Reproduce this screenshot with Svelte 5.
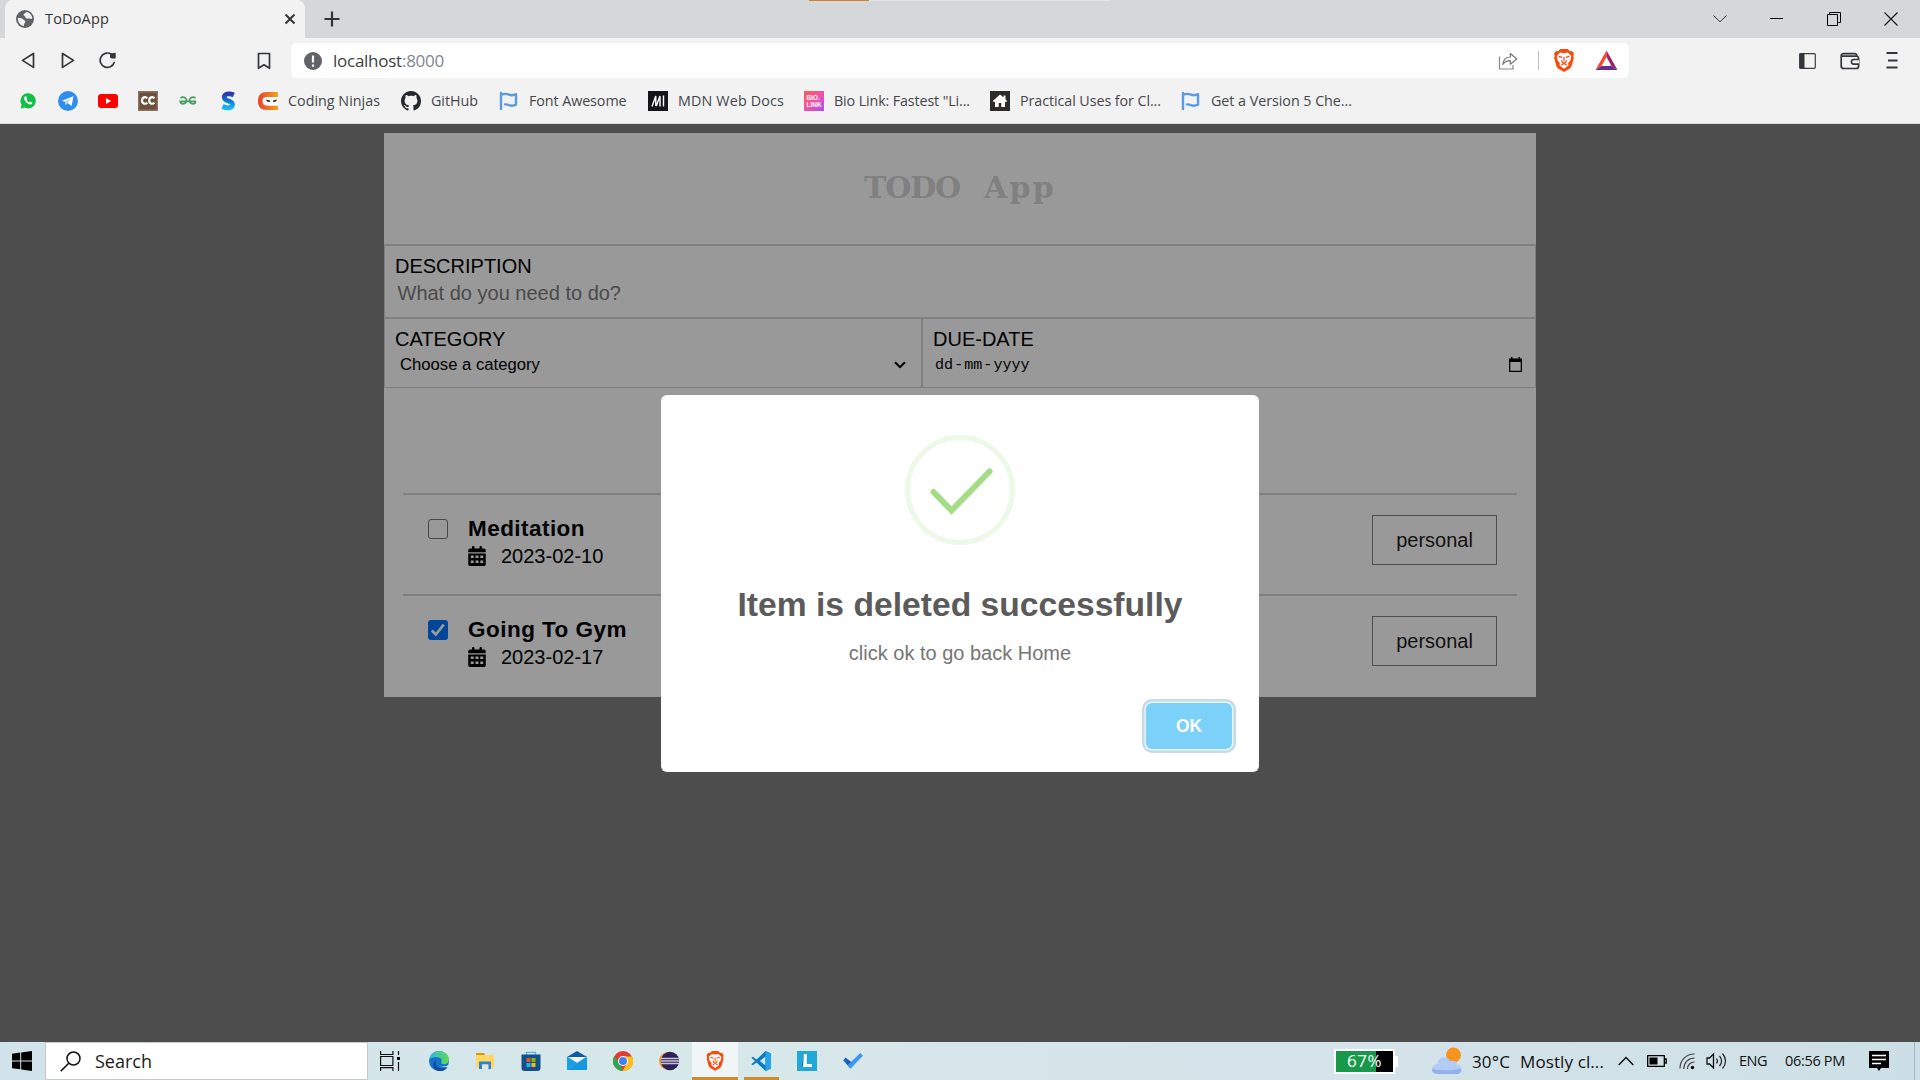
<script>
  // Spreads the letters so that a label takes the given width.
  function fit(node, width) {
    const natural = node.getBoundingClientRect().width;
    node.style.letterSpacing = `${(width - natural) / node.textContent.length}px`;
  }

  const bookmarks = [
    { icon: 'whatsapp' },
    { icon: 'telegram' },
    { icon: 'youtube' },
    { icon: 'cc' },
    { icon: 'gfg' },
    { icon: 's' },
    { icon: 'ninjas', label: 'Coding Ninjas', width: 92 },
    { icon: 'github', label: 'GitHub', width: 47 },
    { icon: 'flag', label: 'Font Awesome', width: 97.5 },
    { icon: 'mdn', label: 'MDN Web Docs', width: 106 },
    { icon: 'bio', label: 'Bio Link: Fastest "Li...', width: 136 },
    { icon: 'house', label: 'Practical Uses for Cl...', width: 141 },
    { icon: 'flag', label: 'Get a Version 5 Che...', width: 141 },
  ];

  const items = [
    { title: 'Meditation', width: 117, date: '2023-02-10', category: 'personal', done: false },
    { title: 'Going To Gym', width: 159, date: '2023-02-17', category: 'personal', done: true },
  ];

  const apps = ['edge', 'explorer', 'store', 'mail', 'chrome', 'eclipse', 'brave', 'vscode', 'l', 'check'];
</script>

{#snippet lion()}
  <path d="M6.2 0h7.6l2 2.2 2.2-.2 2 2.8-.8 2.2.6 2-2 7.4c-.6 2-2 3.200-3.600 4.200L10 23l-4.200-2.400c-1.600-1-3-2.200-3.600-4.200L.2 9l.6-2L0 4.800 2 2l2.200.2z" fill="#fb4a0b" />
  <path d="M6 3.400l4 .8 4-.8 3.200 3.600-.6 4-2.400 3 .2 2.600L10 19.800l-4.400-3.200.2-2.600-2.400-3-.6-4z" fill="#fff" />
  <path d="M4.600 7.400l3.600 1M15.400 7.400l-3.600 1M10 8v4M7.600 11.200l.6 2 1.800.8 1.800-.8.600-2M7.200 16.200L10 14.400l2.800 1.800" fill="none" stroke="#fb4a0b" stroke-width="1.200" />
{/snippet}

<div class="screen">
  <header class="tabs">
    <div class="tab">
      <svg class="globe" width="18" height="18" viewBox="0 0 18 18"><circle cx="9" cy="9" r="9" fill="#5f6368" /><path d="M1.800 8c2.500 0 5 0 5.500 1.500.3 1 1.600.6 2 1.800.3 1.400-1.500 1.500-1.300 4.700C4.500 15.500 1.800 12.500 1.800 8zM10 2c-.3 1.800-2.500 1.200-2.500 2.700S9 5.500 9.200 6.700c.3 1.600 1.800 2.300 3.800 1.800 1-.3 2 .2 3.200.5C16.500 5.500 14 2.500 10 2z" fill="#f2f2f2" /></svg>
      <span class="tab-title"><span class="fit" use:fit={64}>ToDoApp</span></span>
      <svg width="12" height="12" viewBox="0 0 12 12"><path d="M1.500 1.500l9 9M10.500 1.500l-9 9" stroke="#2f3236" stroke-width="1.900" /></svg>
    </div>
    <svg class="plus" width="16" height="16" viewBox="0 0 16 16"><path d="M8 .5v15M.5 8h15" stroke="#303236" stroke-width="2.200" /></svg>
    <div class="snapbar"><i></i></div>
    <div class="window-buttons">
      <svg width="14" height="14" viewBox="0 0 14 14"><path d="M.5 3.500L7 9.800l6.500-6.300" fill="none" stroke="#333" stroke-width="1" /></svg>
      <svg width="14" height="14" viewBox="0 0 14 14"><path d="M0 6.500h13" stroke="#000" stroke-width="1" /></svg>
      <svg width="14" height="14" viewBox="0 0 14 14"><path d="M.5 2.500h10v11H.5zM2.500 2.500v-2h11v10h-3" fill="none" stroke="#000" stroke-width="1" /></svg>
      <svg width="14" height="14" viewBox="0 0 14 14"><path d="M.5.5l13 13M13.500.5l-13 13" stroke="#111" stroke-width="1.100" /></svg>
    </div>
  </header>

  <div class="toolbar">
    <div class="nav">
      <svg width="18" height="20" viewBox="0 0 18 20"><path d="M14.500 2.500v13.900L3.500 9.400z" fill="none" stroke="#33363a" stroke-width="1.700" stroke-linejoin="round" /></svg>
      <svg width="18" height="20" viewBox="0 0 18 20"><path d="M3.500 2.500v13.900l11-7z" fill="none" stroke="#33363a" stroke-width="1.700" stroke-linejoin="round" /></svg>
      <svg width="18" height="20" viewBox="0 0 18 20"><path d="M12 3A7.200 7.200 0 1 0 15.200 11.500" fill="none" stroke="#33363a" stroke-width="1.700" stroke-linecap="round" /><path d="M11.500 2.500l5.200-.8v5.800h-3.500c-2 0-2.400-1-2.200-2.500z" fill="#33363a" /></svg>
    </div>
    <svg class="ribbon" width="14" height="18" viewBox="0 0 14 18"><path d="M1.500 1.500h11v14.800L7 12.800l-5.500 3.500z" fill="none" stroke="#33363a" stroke-width="1.700" stroke-linejoin="round" /></svg>
    <div class="address">
      <svg width="18" height="18" viewBox="0 0 18 18"><circle cx="9" cy="9" r="9" fill="#5f6368" /><path d="M9 3.500v7M9 12.500v2.300" stroke="#fff" stroke-width="2.200" /></svg>
      <span class="url"><span class="fit" use:fit={111}>localhost<span class="port">:8000</span></span></span>
      <svg class="share" width="20" height="20" viewBox="0 0 20 20"><path d="M1.500 5.500v12.500H15v-4" fill="none" stroke="#888" stroke-width="1.200" /><path d="M4.800 13.500c.3-4.500 3.200-7.300 7.500-7.500V2.500L18.800 8l-6.500 5.200v-3.500c-3.300-.2-5.700 1.200-7.500 3.800z" fill="none" stroke="#777" stroke-width="1.200" stroke-linejoin="round" /></svg>
      <i class="divider"></i>
      <svg class="shield" width="20" height="23" viewBox="0 0 20 23">{@render lion()}</svg>
      <svg width="23" height="21" viewBox="0 0 23 21"><path d="M11.500.5L.5 20l6-4 5-9z" fill="#ff4724" /><path d="M11.500.5l11 19.500-6-4-5-9z" fill="#9e1f63" /><path d="M.5 20h22l-6-4h-10z" fill="#662d91" /></svg>
    </div>
    <div class="panel-buttons">
      <svg width="17" height="16" viewBox="0 0 17 16"><rect x=".7" y=".7" width="15.600" height="14.600" rx="1" fill="none" stroke="#3b3e43" stroke-width="1.200" /><path d="M.5.5h5v15h-5z" fill="#33363a" /></svg>
      <svg width="20" height="18" viewBox="0 0 20 18"><path d="M1.200 4.200v9.800c0 1.500.8 2.500 2.500 2.500h12.600c1.500 0 2.300-1 2.300-2.500V6.500c0-1.500-.8-2.300-2.300-2.300zM1.200 4.200c0-1.700.8-2.700 2.300-2.700h11.300c1.300 0 2 1 2 2.700" fill="none" stroke="#33363a" stroke-width="1.700" /><path d="M3 2.800h12" stroke="#777" /><path d="M19 7.500h-5.300a2.300 2.300 0 0 0 0 4.600H19" fill="#f2f2f2" stroke="#33363a" stroke-width="1.600" /></svg>
      <svg width="12" height="17" viewBox="0 0 12 17"><path d="M.5 1h11M2 8.500h9.500M.5 15.500h11" stroke="#33363a" stroke-width="1.900" /></svg>
    </div>
  </div>

  <nav class="bookmarks">
    {#each bookmarks as mark}
      <div class="bookmark">
        <svg width="20" height="20" viewBox="0 0 20 20">
          {#if mark.icon === 'whatsapp'}
            <path d="M1.200 19l1.400-5A8.600 8.600 0 1 1 6.200 17.600z" fill="#fff" /><path d="M2.500 17.700l1-3.900a7.700 7.700 0 1 1 2.900 2.800z" fill="#12c143" />
            <path d="M7 5.500c-1.500 1-1.200 3 .8 5.300s4.400 3.500 6 2.300c.7-.6.800-1.500.3-1.800l-1.700-.9-1.100 1c-1.300-.4-2.300-1.400-2.900-2.600l.8-1-.8-2.100c-.3-.5-.9-.5-1.400-.2z" fill="#fff" />
          {:else if mark.icon === 'telegram'}
            <circle cx="10" cy="10" r="10" fill="#2f8eed" /><path d="M3.800 9.700L15.500 5.200 13.600 15l-4-2.900-2 1.900-.5-3.200z" fill="#fff" /><path d="M7.200 11l6-4-4.200 4.700-1.200 1.500z" fill="#8cc1f4" />
          {:else if mark.icon === 'youtube'}
            <rect y="3" width="20" height="14" rx="3" fill="#f00" /><path d="M8 7l5.200 3L8 13z" fill="#fff" />
          {:else if mark.icon === 'cc'}
            <rect width="20" height="20" fill="#6a503d" /><path d="M.7.700h18.600v18.600H.7z" fill="none" stroke="#8b735f" stroke-width="1.400" /><path d="M9.300 7.300C7.500 5.300 4 6 4 9.500s3.500 4 5.300 2.200M16.500 7.300c-1.800-2-5.300-1.300-5.300 2.200s3.500 4 5.300 2.200" fill="none" stroke="#fff" stroke-width="2.200" />
          {:else if mark.icon === 'gfg'}
            <path d="M2.500 7.200c1.500-1.500 5.500-1.500 6 1.700.3 4.500-5.300 5.300-6.300 1.400H18M17.500 7.200c-1.500-1.500-5.500-1.500-6 1.700-.3 4.500 5.300 5.300 6.300 1.400" fill="none" stroke="#4a9e60" stroke-width="1.700" />
          {:else if mark.icon === 's'}
            <defs><linearGradient id="sg" x2="0" y2="1"><stop stop-color="#3036a8" /><stop offset=".5" stop-color="#087bd0" /><stop offset="1" stop-color="#13b9ef" /></linearGradient></defs>
            <path d="M15.800 4C11 1.800 6.300 2.800 6.300 6.200c0 4.600 8.200 3 8.200 7.300 0 3.800-5.500 4.300-10 2" fill="none" stroke="url(#sg)" stroke-width="4.800" />
          {:else if mark.icon === 'ninjas'}
            <defs><linearGradient id="ng"><stop stop-color="#e8402b" /><stop offset="1" stop-color="#f6a21c" /></linearGradient></defs>
            <path d="M20 1H9C3 1 0 4 0 10s3 9 9 9h11v-4.500H9C6 14.500 4.500 13 4.500 10S6 6 9 6h11z" fill="url(#ng)" /><path d="M6 10c0-2 1-4 4-4h10v8.500H10c-3 0-4-2-4-4.500z" fill="#fff" /><path d="M8 8.500l4 1v1.400l-3-.5zM19 8.500l-4 1v1.400l3-.5z" fill="#222" />
          {:else if mark.icon === 'github'}
            <path transform="scale(1.250)" d="M8 0C3.580 0 0 3.580 0 8c0 3.540 2.290 6.530 5.470 7.590.4.070.55-.17.55-.38 0-.19-.01-.82-.01-1.490-2.010.37-2.530-.49-2.690-.94-.09-.23-.48-.94-.82-1.130-.28-.15-.68-.52-.01-.53.63-.01 1.080.58 1.230.82.72 1.210 1.870.87 2.330.66.07-.52.28-.87.51-1.070-1.780-.2-3.640-.89-3.640-3.950 0-.87.31-1.590.82-2.150-.08-.2-.36-1.020.08-2.120 0 0 .67-.21 2.200.82.64-.18 1.320-.27 2-.27s1.360.09 2 .27c1.530-1.040 2.200-.82 2.200-.82.44 1.100.16 1.920.08 2.120.51.56.82 1.270.82 2.150 0 3.070-1.870 3.750-3.650 3.950.29.25.54.73.54 1.480 0 1.070-.01 1.930-.01 2.200 0 .21.15.46.55.38A8.010 8.010 0 0 0 16 8c0-4.420-3.580-8-8-8z" fill="#24292f" />
          {:else if mark.icon === 'flag'}
            <path d="M2 2v16M2 4c3-1.800 5-1.500 8-.3 2.500 1 4.500.7 7-.5v10.500c-2.500 1.200-4.500 1.500-7 .5-1.300-.6-2.500-1-4-.8" fill="none" stroke="#5b9ae8" stroke-width="2.400" stroke-linecap="round" stroke-linejoin="round" />
          {:else if mark.icon === 'mdn'}
            <rect width="20" height="20" fill="#15141a" /><path d="M4 15.500L7.800 5v10M8.300 15L12 5v10.500M15.500 4.500v11" fill="none" stroke="#fff" stroke-width="1.400" />
          {:else if mark.icon === 'bio'}
            <defs><linearGradient id="bg" x2="1" y2="1"><stop stop-color="#ff5a4d" /><stop offset=".5" stop-color="#f651a5" /><stop offset="1" stop-color="#a74cff" /></linearGradient></defs>
            <rect width="20" height="20" fill="url(#bg)" /><text x="2.500" y="9.300" class="bio-text">BIO.</text><text x="2.500" y="16.300" class="bio-text">LINK</text>
          {:else if mark.icon === 'house'}
            <rect width="20" height="20" fill="#2c2b2a" /><path d="M10 3.500L2.800 10l1.200 1.200 1-.8V16h3.700v-4h2.600v4H15v-5.600l1 .8 1.200-1.200-1.700-1.600V4.500h-2v2z" fill="#fff" />
          {/if}
        </svg>
        {#if mark.label}<span class="fit" use:fit={mark.width}>{mark.label}</span>{/if}
      </div>
    {/each}
  </nav>

  <main class="page">
    <section class="card">
      <h1><span class="fit" use:fit={96}>TODO</span><span class="fit" use:fit={72}>App</span></h1>
      <div class="field">
        <div class="label">DESCRIPTION</div>
        <div class="placeholder">What do you need to do?</div>
      </div>
      <div class="pair">
        <div class="field">
          <div class="label">CATEGORY</div>
          <div class="select">
            <span>Choose a category</span>
            <svg width="12" height="8" viewBox="0 0 12 8"><path d="M1 1.200l5 5 5-5" fill="none" stroke="#000" stroke-width="2" /></svg>
          </div>
        </div>
        <div class="field">
          <div class="label">DUE-DATE</div>
          <div class="date">
            <span class="parts"><span>dd</span><span>-</span><span>mm</span><span>-</span><span>yyyy</span></span>
            <svg width="13" height="15" viewBox="0 0 13 15"><path d="M0 1.500h2V0h1.500v1.500h6V0H11v1.500h2V15H0zM1.300 5v8.700h10.400V5z" fill="#000" fill-rule="evenodd" /></svg>
          </div>
        </div>
      </div>
      <div class="spacer"></div>
      <div class="list">
        {#each items as item}
          <article>
            <div class="box" class:done={item.done}>
              {#if item.done}<svg width="20" height="20" viewBox="0 0 20 20"><path d="M3.800 10.500l4 4 8-10" fill="none" stroke="#999" stroke-width="2.800" /></svg>{/if}
            </div>
            <div class="info">
              <h3><span class="fit" use:fit={item.width}>{item.title}</span></h3>
              <div class="due">
                <svg width="18" height="20" viewBox="0 0 448 512"><path d="M128 0c17.700 0 32 14.300 32 32v32h128V32c0-17.700 14.300-32 32-32s32 14.300 32 32v32h48c26.500 0 48 21.500 48 48v48H0v-48c0-26.500 21.500-48 48-48h48V32c0-17.700 14.300-32 32-32zM0 192h448v272c0 26.500-21.500 48-48 48H48c-26.500 0-48-21.500-48-48zm64 52v60h76v-60zm122 0v60h76v-60zm122 0v60h76v-60zM64 372v64h76v-64zm122 0v64h76v-64zm122 0v64h76v-64z" fill-rule="evenodd" /></svg>
                <span>{item.date}</span>
              </div>
            </div>
            <div class="tag">{item.category}</div>
          </article>
        {/each}
      </div>
    </section>

    <div class="modal">
      <svg class="success" width="110" height="110" viewBox="0 0 110 110"><circle cx="55" cy="55" r="52.500" fill="none" stroke="#edf8e7" stroke-width="5" /><path d="M28.500 57l18 18.500L84.500 36.500" fill="none" stroke="#a5dc86" stroke-width="6" stroke-linecap="round" /></svg>
      <h2>Item is deleted successfully</h2>
      <p>click ok to go back Home</p>
      <button>OK</button>
    </div>
  </main>

  <footer class="taskbar">
    <div class="start"><svg width="20" height="20" viewBox="0 0 20 20"><path d="M0 2.800l8.200-1.200v7.800H0zM9.200 1.400L20 0v9.400H9.200zM0 10.400h8.200v7.900L0 17.200zM9.200 10.400H20V20L9.200 18.500z" /></svg></div>
    <div class="search">
      <svg width="21" height="21" viewBox="0 0 21 21"><circle cx="13.500" cy="7.500" r="6.500" fill="none" stroke="#111" stroke-width="1.500" /><path d="M9 12l-8.300 8.300" stroke="#111" stroke-width="1.600" /></svg>
      <span class="fit" use:fit={57}>Search</span>
    </div>
    <div class="taskview"><svg width="20" height="20" viewBox="0 0 20 20"><path d="M.6 0v3.500h12.300V0M.6 5.500h12.300v9H.6zM.6 20v-3.300h12.300V20M18.500 0v4M18.500 11v9" fill="none" stroke="#111" stroke-width="1.200" /><path d="M17 6h3v3h-3z" /></svg></div>
    {#each apps as app}
      <div class="app" class:active={app === 'brave'} class:open={app === 'vscode'}>
        <svg width="20" height="20" viewBox="0 0 20 20">
          {#if app === 'edge'}
            <defs><linearGradient id="eg"><stop stop-color="#2fb4e4" /><stop offset="1" stop-color="#5fdc52" /></linearGradient></defs>
            <circle cx="10" cy="10" r="10" fill="#1571c8" /><path d="M0 9C1 3 5 0 10 0c6 0 10 4 10 8.200 0 3-2.300 5-5 5s-3.300-1.200-2.600-2.200C13.500 9 11.500 6 7.500 6 4 6 1.500 7 0 9z" fill="url(#eg)" /><path d="M8 8.500c-3 2.500-1.500 8.500 4.500 9 3 .2 5-1 6.200-2C16.500 21 9 21.500 5.500 17.500c-2.500-3.500-1-7.500 2.500-9z" fill="#0c4d9b" /><path d="M8.500 8.500c-1.500 3.500 1 6.500 4.500 6.900 2.500.2 5-.4 7-2l-.7 2c-2.500 1-6 1.300-8.300-.3-2.500-1.600-3.700-4.600-2.500-6.600z" fill="#dcebf2" />
          {:else if app === 'explorer'}
            <path d="M1 2h8l1.500 2.500H1z" fill="#d79a00" /><path d="M1 4h18v13H1z" fill="#ffd766" /><path d="M4 18v-7.500h12V18h-2.700v-4.500H7V18z" fill="#2f83cd" /><path d="M7 13.500h6.300V17H7z" fill="#d9e8ee" />
          {:else if app === 'store'}
            <path d="M5.500 4V1.300h9V4" fill="none" stroke="#4bb6e9" stroke-width="1.300" /><path d="M.5 3.500h19V17a3 3 0 0 1-3 3h-13a3 3 0 0 1-3-3z" fill="#12508c" /><path d="M5.500 7h4v4h-4z" fill="#f25022" /><path d="M10.500 7h4v4h-4z" fill="#7fba00" /><path d="M5.500 12h4v4h-4z" fill="#25b1ef" /><path d="M10.500 12h4v4h-4z" fill="#ffb900" />
          {:else if app === 'mail'}
            <path d="M0 6l10-6 10 6z" fill="#0b5ba9" /><path d="M0 6h20v13H0z" fill="#2daaea" /><path d="M1 6h18l-9 6z" fill="#f1f3f6" /><path d="M0 19L20 6v13z" fill="#1697df" /><path d="M0 6l10 6L0 18z" fill="#1aa0e4" />
          {:else if app === 'chrome'}
            <circle cx="10" cy="10" r="10" fill="#e33b2e" /><path d="M1.300 5L7 13.500 10 20A10 10 0 0 1 1.300 5z" fill="#31a650" /><path d="M10 5.500h9A10 10 0 0 1 9.500 20l4.500-8z" fill="#fbc116" /><circle cx="10" cy="10" r="5" fill="#fff" /><circle cx="10" cy="10" r="4" fill="#3f83f2" />
          {:else if app === 'eclipse'}
            <circle cx="9" cy="10" r="9" fill="#f59928" /><circle cx="11" cy="10" r="9.200" fill="#2d2256" /><path d="M2 7.500h18M2 10h18M2 12.500h18" stroke="#c9c4dc" stroke-width="1.500" />
          {:else if app === 'brave'}
            <g transform="translate(1.500 0) scale(.86)">{@render lion()}</g>
          {:else if app === 'vscode'}
            <path d="M14.500 0L20 2.500v15L14.500 20 5.500 11.500 2 14.300.3 13.300 4 10 .3 6.700 2 5.700l3.500 2.800zM14.500 5.500L8.800 10l5.700 4.500z" fill="#087cc7" fill-rule="evenodd" /><path d="M14.500 0L20 2.500v15L14.500 20z" fill="#27a1ea" />
          {:else if app === 'l'}
            <rect width="20" height="20" fill="#20a9d8" /><path d="M5 16l2-13v9z" fill="#123a60" /><path d="M6.800 3h3v10H15v3H6z" fill="#fff" />
          {:else}
            <path d="M2.500 6.500L.3 9.200l7 8.300 4-4.200z" fill="#175fc2" /><path d="M17.300 2L20 4.700 7.600 17.600 4.800 14z" fill="#3e97ec" />
          {/if}
        </svg>
      </div>
    {/each}
    <div class="tray">
      <div class="battery-meter"><span class="fit" use:fit={35}>67%</span></div>
      <svg class="weather" width="30" height="28" viewBox="0 0 30 28"><circle cx="21.500" cy="8" r="7.500" fill="#f7941e" /><path d="M7 27c-9 0-9-9.500-1.500-10C6 9.500 15 8 18 14c5-1 7 1 7 3.500 6.500.5 6 9.500 0 9.500z" fill="#b3ccf6" /><path d="M7 27c-8 0-7.500-4.500-6-5.500 3 2.500 19 2.500 28 0 1 3-1 5.500-4 5.500z" fill="#8fb1ec" /></svg>
      <span class="temp"><span class="fit" use:fit={38}>30°C</span></span>
      <span class="sky"><span class="fit" use:fit={84}>Mostly cl...</span></span>
      <svg class="caret" width="16" height="10" viewBox="0 0 16 10"><path d="M.7 9L8 1.500 15.300 9" fill="none" stroke="#111" stroke-width="1.400" /></svg>
      <svg class="batt" width="20" height="12" viewBox="0 0 20 12"><path d="M.7.700h16.600v10.600H.7zM17.500 4h1.700v4h-1.700" fill="none" stroke="#000" stroke-width="1.300" /><path d="M2.500 2.500h8v7h-8z" /></svg>
      <svg class="wifi" width="16" height="17" viewBox="0 0 16 17"><path d="M1 15.500C1 7 7 1 15.500 1M4.800 16c0-6.500 4.500-11 10.700-11M8.500 16c0-4 3-7 7-7" fill="none" stroke="#444" stroke-width="1.200" /><circle cx="13.500" cy="14.500" r="1.700" /></svg>
      <svg class="sound" width="21" height="18" viewBox="0 0 21 18"><path d="M1 6h2.500L7.500 2v14l-4-4H1z" fill="none" stroke="#111" stroke-width="1.300" /><path d="M10.500 6.500c1.200 1.500 1.200 3.500 0 5M13.500 4c2.500 3 2.500 7 0 10M16.500 1.500c4 4.500 4 10.500 0 15" fill="none" stroke="#222" stroke-width="1.200" /></svg>
      <span class="lang"><span class="fit" use:fit={28}>ENG</span></span>
      <span class="clock"><span class="fit" use:fit={60}>06:56 PM</span></span>
      <svg class="notes" width="20" height="20" viewBox="0 0 20 20"><path d="M0 0h20v17h-8l-2 3-2-3H0z" /><path d="M3 4.500h14M3 8.500h14M3 12.500h9" stroke="#fff" stroke-width="1.300" /></svg>
    </div>
  </footer>
</div>

<style>
  :global(body) { margin: 0; overflow: hidden; }
  .screen { width: 1920px; height: 1080px; display: flex; flex-direction: column; font-family: "Open Sans", "Noto Sans", sans-serif; color: #333; }
  .screen, .screen * { box-sizing: border-box; }
  svg { display: block; flex: none; }
  .fit { display: inline-block; white-space: nowrap; }
  h1, h2, h3, p { margin: 0; }

  .tabs { height: 38px; flex: none; background: #d4d8db; display: flex; align-items: center; padding-left: 5px; }
  .tab { width: 300px; height: 38px; background: #f2f2f2; border-radius: 8px 8px 0 0; display: flex; align-items: center; padding: 0 9px 0 11px; }
  .tab-title { flex: 1; margin-left: 11px; font-size: 14.500px; line-height: 36px; }
  .plus { margin-left: 19px; }
  .snapbar { align-self: flex-start; width: 301px; height: 1px; margin-left: 469px; background: #e6e6e6; }
  .snapbar i { display: block; width: 60px; height: 1px; background: #d08327; }
  .window-buttons { margin-left: auto; margin-right: 22px; display: flex; gap: 43px; }

  .toolbar { height: 45px; flex: none; background: #f2f2f2; display: flex; align-items: center; }
  .nav { display: flex; gap: 22px; margin-left: 19px; width: 238px; }
  .ribbon { margin-right: 20px; }
  .address { width: 1338px; height: 35px; background: #fff; border-radius: 6px; display: flex; align-items: center; padding: 0 11px 0 13px; }
  .url { flex: 1; margin-left: 11px; font-size: 17px; line-height: 34px; color: #3c4043; }
  .port { color: #80868b; }
  .divider { width: 1px; height: 19px; background: #bfc1c4; margin: 0 15px 0 20px; }
  .shield { margin-right: 21px; }
  .panel-buttons { flex: 1; display: flex; align-items: center; justify-content: flex-end; gap: 25px; padding-right: 22px; }
  .panel-buttons svg:nth-child(2) { margin: 0 1px 0 -1px; }

  .bookmarks { height: 41px; flex: none; background: #f2f2f2; border-bottom: 1px solid #d4d8db; display: grid; grid-template-columns: 40px 40px 40px 40px 40px 40px 143px 98px 149px 156px 186px 191px 1fr; padding: 8px 0 12px 18px; }
  .bookmark { display: flex; align-items: center; gap: 10px; font-size: 14.300px; line-height: 20px; color: #45474b; }
  .bio-text { font: bold 6.500px "Liberation Sans", sans-serif; fill: #fff; }

  .page { height: 918px; flex: none; background: #4d4d4d; position: relative; padding-top: 9px; font-family: "Liberation Sans", Arial, sans-serif; color: #000; }
  .card { width: 1152px; height: 564px; margin: 0 auto; background: #999; }
  h1 { height: 112px; border-bottom: 1px solid #808080; display: flex; justify-content: center; gap: 24px; font: bold 30px/110px "DejaVu Serif", "Courier New", serif; color: #808080; }
  .field { height: 73px; border: 1px solid #808080; padding: 8px 13px 0 10px; font-size: 20px; line-height: 24px; }
  .placeholder { padding: 3px 0 0 2.500px; color: #4a4a4a; }
  .pair { display: grid; grid-template-columns: 538px 614px; }
  .pair .field { height: 70px; }
  .select { display: flex; justify-content: space-between; align-items: center; padding: 0 2px 0 5px; margin-top: 4px; font-size: 16.670px; line-height: 20px; }
  .date { display: flex; justify-content: space-between; align-items: center; padding-left: 2px; margin-top: 4px; font: 15.100px/20px "Liberation Mono", monospace; }
  .date svg { margin-bottom: 2px; }
  .parts { display: flex; gap: 1px; }
  .spacer { height: 105px; }
  .list { padding: 0 19px; }
  article { height: 101px; border-top: 2px solid #808080; padding: 0 20px 0 25px; display: flex; align-items: flex-start; }
  .box { width: 20px; height: 20px; margin-top: 24px; border: 1.500px solid #484848; border-radius: 3px; }
  .box.done { border: 0; background: #00479a; }
  .info { flex: 1; margin-left: 20px; padding-top: 20px; }
  h3 { font-size: 22.500px; line-height: 28px; font-weight: bold; }
  .due { display: flex; align-items: center; gap: 15px; font-size: 20px; line-height: 24px; margin-top: 1px; }
  .due svg { margin-bottom: 2px; }
  .due span { padding-bottom: 1px; }
  .tag { width: 125px; height: 50px; margin-top: 20px; border: 1px solid #4d4d4d; text-align: center; font-size: 20px; line-height: 48px; color: #111; }

  .modal { position: absolute; left: 661px; top: 271px; width: 598px; height: 377px; background: #fff; border-radius: 6px; display: flex; flex-direction: column; align-items: center; padding-top: 40px; }
  h2 { margin-top: 41px; font-size: 33.650px; line-height: 38px; color: #5b5b5b; white-space: nowrap; }
  p { margin-top: 17px; font-size: 20px; line-height: 24px; color: #757575; }
  button { align-self: flex-end; width: 86px; height: 46px; margin: 38px 27px 0 0; padding: 1px 0 0; border: 0; border-radius: 6px; background: #7cd1f9; box-shadow: 0 0 0 1.500px #e8f4fb, 0 0 0 4px #c6dae8; font: bold 17.500px "Liberation Sans", Arial, sans-serif; color: #fff; }

  .taskbar { height: 38px; flex: none; display: flex; background: linear-gradient(90deg, #d2e2ea, #d7e8ea 35%, #d5e3ea 70%, #cddfe6); color: #1a1a1a; }
  .start { width: 45px; display: flex; align-items: center; padding-left: 12px; }
  .search { width: 323px; height: 38px; background: #fff; border: 1px solid #c6c9cb; display: flex; align-items: center; gap: 14px; padding-left: 14px; font-size: 18px; line-height: 36px; }
  .taskview { width: 48px; display: flex; align-items: center; padding-left: 12px; }
  .app { width: 46px; height: 38px; display: flex; justify-content: center; align-items: center; padding-top: 3px; border-bottom: 3px solid transparent; }
  .active { background: #f0f5f8; border-bottom-color: #d08a2b; }
  .open { background: linear-gradient(#d08a2b, #d08a2b) center bottom / 35px 3px no-repeat border-box; }
  .tray { flex: 1; margin-left: 2px; padding-left: 456px; border-right: 1px solid #aab6bb; margin-right: 5px; display: flex; align-items: center; font-size: 17px; line-height: 36px; color: #111; }
  .battery-meter { position: relative; width: 61px; height: 25px; border: 2px solid #fff; background: linear-gradient(90deg, #18994a 70%, #000 70%); color: #fff; font-size: 17px; line-height: 20px; padding-left: 11px; }
  .battery-meter::after { content: ""; position: absolute; left: 59px; top: 5px; width: 3px; height: 11px; background: #fff; }
  .weather { margin-left: 37px; }
  .temp { margin-left: 10px; width: 48px; padding-top: 1px; }
  .sky { width: 98px; padding-top: 1px; }
  .batt { margin-left: 13px; }
  .wifi { margin-left: 12px; }
  .sound { margin-left: 11px; }
  .lang { margin-left: 12px; width: 46px; font-size: 14.500px; }
  .clock { width: 84px; font-size: 14.500px; }
</style>
